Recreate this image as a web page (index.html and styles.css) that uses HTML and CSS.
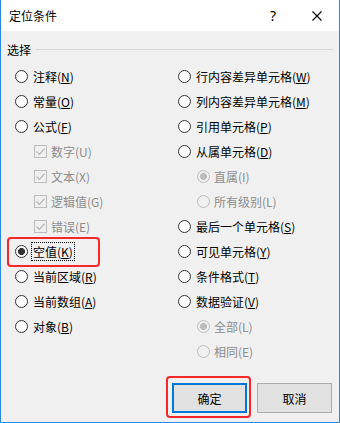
FILE: index.html
```html
<!DOCTYPE html>
<html lang="zh-CN">
<head>
<meta charset="utf-8">
<title>定位条件</title>
<link rel="stylesheet" href="styles.css">
</head>
<body>
<div class="window">
  <div class="titlebar">
    <span class="title">定位条件</span>
    <span class="help">?</span>
    <span class="close"><svg width="10" height="10" viewBox="0 0 10 10"><path d="M0.5 0.5L9.5 9.5M9.5 0.5L0.5 9.5" stroke="#000" stroke-width="1.1" fill="none"/></svg></span>
  </div>
  <div class="content">
    <div class="group-head"><span class="group-label">选择</span><span class="rule"></span></div>
    <div class="options">
      <div class="col col-left">
        <div class="row"><span class="radio"></span><span>注释(<u>N</u>)</span></div>
        <div class="row"><span class="radio"></span><span>常量(<u>O</u>)</span></div>
        <div class="row"><span class="radio"></span><span>公式(<u>F</u>)</span></div>
        <div class="row sub disabled"><span class="check"><svg width="11" height="11" viewBox="0 0 11 11"><path d="M1.5 5.5L4.3 8.3L9.6 2.6" stroke="#b4b4b4" stroke-width="1.2" fill="none"/></svg></span><span>数字(U)</span></div>
        <div class="row sub disabled"><span class="check"><svg width="11" height="11" viewBox="0 0 11 11"><path d="M1.5 5.5L4.3 8.3L9.6 2.6" stroke="#b4b4b4" stroke-width="1.2" fill="none"/></svg></span><span>文本(X)</span></div>
        <div class="row sub disabled"><span class="check"><svg width="11" height="11" viewBox="0 0 11 11"><path d="M1.5 5.5L4.3 8.3L9.6 2.6" stroke="#b4b4b4" stroke-width="1.2" fill="none"/></svg></span><span>逻辑值(G)</span></div>
        <div class="row sub disabled"><span class="check"><svg width="11" height="11" viewBox="0 0 11 11"><path d="M1.5 5.5L4.3 8.3L9.6 2.6" stroke="#b4b4b4" stroke-width="1.2" fill="none"/></svg></span><span>错误(E)</span></div>
        <div class="row highlight"><span class="radio checked"></span><span class="focus">空值(<u>K</u>)</span></div>
        <div class="row"><span class="radio"></span><span>当前区域(<u>R</u>)</span></div>
        <div class="row"><span class="radio"></span><span>当前数组(<u>A</u>)</span></div>
        <div class="row"><span class="radio"></span><span>对象(<u>B</u>)</span></div>
      </div>
      <div class="col col-right">
        <div class="row"><span class="radio"></span><span>行内容差异单元格(<u>W</u>)</span></div>
        <div class="row"><span class="radio"></span><span>列内容差异单元格(<u>M</u>)</span></div>
        <div class="row"><span class="radio"></span><span>引用单元格(<u>P</u>)</span></div>
        <div class="row"><span class="radio"></span><span>从属单元格(<u>D</u>)</span></div>
        <div class="row sub disabled"><span class="radio checked"></span><span>直属(I)</span></div>
        <div class="row sub disabled"><span class="radio"></span><span>所有级别(L)</span></div>
        <div class="row"><span class="radio"></span><span>最后一个单元格(<u>S</u>)</span></div>
        <div class="row"><span class="radio"></span><span>可见单元格(<u>Y</u>)</span></div>
        <div class="row"><span class="radio"></span><span>条件格式(<u>T</u>)</span></div>
        <div class="row"><span class="radio"></span><span>数据验证(<u>V</u>)</span></div>
        <div class="row sub disabled"><span class="radio checked"></span><span>全部(L)</span></div>
        <div class="row sub disabled"><span class="radio"></span><span>相同(E)</span></div>
      </div>
    </div>
    <div class="buttons">
      <span class="btn-highlight"><button class="btn btn-default">确定</button></span>
      <button class="btn">取消</button>
    </div>
  </div>
</div>
</body>
</html>
```

FILE: styles.css
```css
html, body {
  margin: 0;
  padding: 0;
}
body {
  font-family: "Noto Sans CJK SC", "Noto Sans", sans-serif;
  font-size: 12px;
  color: #000;
  background: #f0f0f0;
}
.window {
  width: 340px;
  height: 423px;
  box-sizing: border-box;
  border: 1px solid #2a8ae0;
  border-top: none;
  display: flex;
  flex-direction: column;
  background: #f0f0f0;
}
.titlebar {
  height: 31px;
  background: #fff;
  display: flex;
  align-items: center;
  flex: none;
}
.title {
  flex: 1;
  padding-left: 8px;
  font-size: 12px;
  line-height: 17px;
}
.help {
  width: 14px;
  text-align: center;
  font-family: "Noto Sans", sans-serif;
  font-size: 14px;
  line-height: 17px;
  margin-right: 32px;
}
.close {
  display: flex;
  width: 10px;
  height: 10px;
  margin-right: 17px;
}
.content {
  flex: 1;
  padding: 0 6px;
  display: flex;
  flex-direction: column;
}
.group-head {
  display: flex;
  align-items: center;
  margin-top: 10px;
  height: 17px;
}
.group-label {
  line-height: 17px;
}
.rule {
  flex: 1;
  height: 1px;
  background: #d8d8d8;
  margin-left: 5px;
  margin-top: -1px;
}
.options {
  display: flex;
  margin-top: 6px;
}
.col {
  display: flex;
  flex-direction: column;
}
.col-left {
  width: 163px;
  padding-left: 8px;
}
.row {
  height: 25px;
  display: flex;
  align-items: center;
  line-height: 17px;
  white-space: nowrap;
  position: relative;
}
.row.sub {
  padding-left: 19px;
}
.disabled {
  color: #8c8c8c;
}
.radio {
  width: 13px;
  height: 13px;
  box-sizing: border-box;
  border: 1px solid #333;
  border-radius: 50%;
  background: #fff;
  margin-right: 5px;
  flex: none;
}
.radio.checked {
  background: radial-gradient(circle, #333 0 3.2px, #fff 3.8px);
}
.disabled .radio {
  border-color: #bcbcbc;
  background: #f0f0f0;
  margin-right: 4px;
}
.disabled .radio.checked {
  background: radial-gradient(circle, #bcbcbc 0 3.2px, #f0f0f0 3.8px);
}
.check {
  width: 13px;
  height: 13px;
  box-sizing: border-box;
  border: 1px solid #bcbcbc;
  background: #f0f0f0;
  margin-right: 4px;
  display: flex;
  align-items: center;
  justify-content: center;
  flex: none;
}
.check svg {
  display: block;
}
u {
  text-decoration: underline;
  text-underline-offset: 1px;
}
.focus {
  border: 1px dotted #000;
  padding: 0 1px;
  margin-left: -2px;
}
.highlight::before {
  content: "";
  position: absolute;
  left: -8px;
  top: -2px;
  width: 93px;
  height: 30px;
  box-sizing: border-box;
  border: 2px solid #f5272b;
  border-radius: 4px;
}
.buttons {
  display: flex;
  justify-content: flex-end;
  gap: 10px;
  margin-top: 19px;
  margin-right: 1px;
}
.btn {
  width: 75px;
  height: 30px;
  box-sizing: border-box;
  border: 1px solid #adadad;
  background: #e1e1e1;
  font-family: "Noto Sans CJK SC", "Noto Sans", sans-serif;
  font-size: 12px;
  color: #000;
  padding: 0;
  margin: 0;
  display: block;
}
.btn-default {
  border: 2px solid #0078d7;
}
.btn-highlight {
  position: relative;
  display: block;
}
.btn-highlight::before {
  content: "";
  position: absolute;
  left: -6px;
  top: -7px;
  right: -4px;
  bottom: -5px;
  border: 2px solid #f5272b;
  border-radius: 4px;
}
```
